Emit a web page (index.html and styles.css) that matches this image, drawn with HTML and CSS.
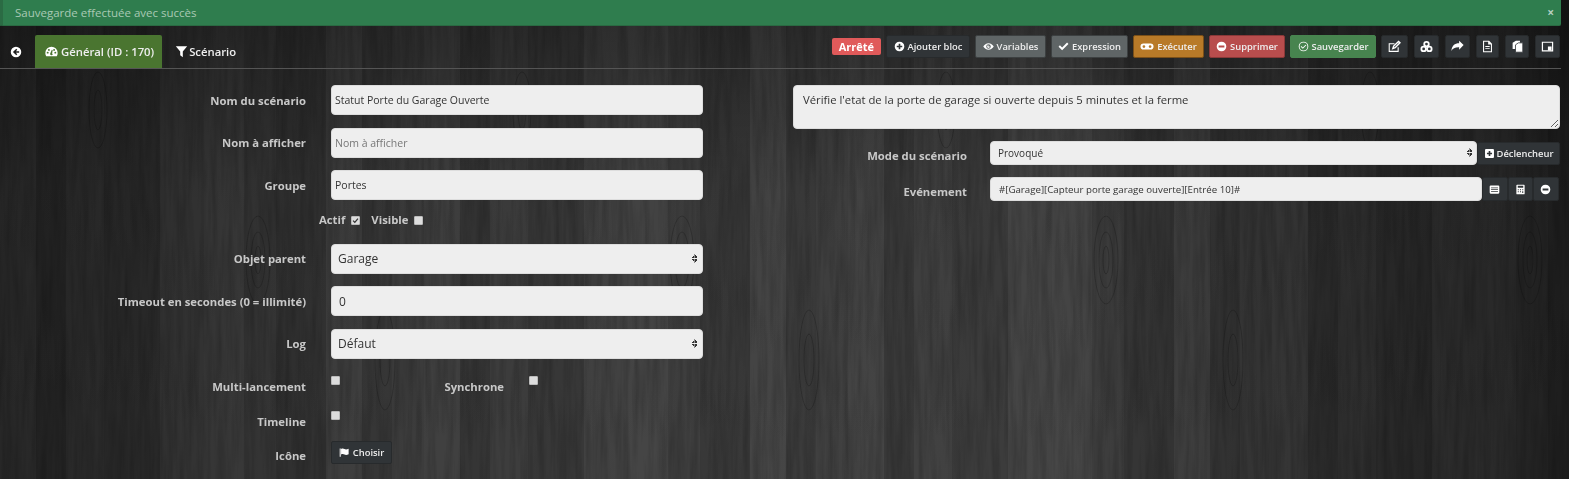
FILE: index.html
```html
<!DOCTYPE html>
<html lang="fr">
<head>
    <meta charset="UTF-8">
    <meta name="viewport" content="width=device-width, initial-scale=1.0">
    <title>Scénario</title>
    <link rel="stylesheet" href="styles.css">
</head>
<body>
    <!-- fond bois -->
    <svg class="wood" width="1569" height="479" aria-hidden="true">
        <defs>
            <filter id="grain" x="0" y="0" width="100%" height="100%">
                <feTurbulence type="fractalNoise" baseFrequency="0.18 0.012" numOctaves="3" seed="11"/>
                <feColorMatrix type="matrix" values="0 0 0 0 0  0 0 0 0 0  0 0 0 0 0  1.400 0 0 0 -0.45"/>
            </filter>
            <pattern id="planks" width="424" height="479" patternUnits="userSpaceOnUse">
                <rect x="0" width="36" height="479" fill="#fff" opacity="0.025"/>
                <rect x="36" width="30" height="479" fill="#000" opacity="0.12"/>
                <rect x="104" width="56" height="479" fill="#000" opacity="0.09"/>
                <rect x="160" width="44" height="479" fill="#fff" opacity="0.02"/>
                <rect x="204" width="40" height="479" fill="#fff" opacity="0.035"/>
                <rect x="276" width="50" height="479" fill="#000" opacity="0.1"/>
                <rect x="326" width="36" height="479" fill="#fff" opacity="0.03"/>
                <rect x="362" width="30" height="479" fill="#000" opacity="0.07"/>
                <g fill="none" stroke="#000" stroke-opacity="0.2">
                    <ellipse cx="258" cy="260" rx="12" ry="44"/>
                    <ellipse cx="258" cy="260" rx="7" ry="28"/>
                    <ellipse cx="258" cy="260" rx="3" ry="14"/>
                    <ellipse cx="98" cy="110" rx="9" ry="38"/>
                    <ellipse cx="98" cy="110" rx="4" ry="20"/>
                    <ellipse cx="385" cy="360" rx="10" ry="50"/>
                    <ellipse cx="385" cy="360" rx="5" ry="26"/>
                </g>
            </pattern>
            <linearGradient id="shade-x">
                <stop offset="0" stop-color="#000" stop-opacity="0.45"/>
                <stop offset="0.25" stop-color="#000" stop-opacity="0.1"/>
                <stop offset="0.65" stop-color="#000" stop-opacity="0"/>
                <stop offset="1" stop-color="#000" stop-opacity="0.5"/>
            </linearGradient>
            <linearGradient id="shade-y" x1="0" y1="0" x2="0" y2="1">
                <stop offset="0" stop-color="#000" stop-opacity="0.35"/>
                <stop offset="0.4" stop-color="#000" stop-opacity="0.05"/>
                <stop offset="1" stop-color="#000" stop-opacity="0"/>
            </linearGradient>
        </defs>
        <rect width="1569" height="479" fill="#424242"/>
        <rect width="1569" height="479" fill="url(#planks)"/>
        <rect width="1569" height="479" filter="url(#grain)" opacity="0.22"/>
        <rect width="1569" height="479" fill="url(#shade-x)"/>
        <rect width="1569" height="479" fill="url(#shade-y)"/>
    </svg>

    <div class="alert">
        <span>Sauvegarde effectuée avec succès</span>
        <span class="alert-close">×</span>
    </div>

    <div class="toolbar">
        <a class="back">
            <svg class="ico back-ico" viewBox="0 0 16 16"><path d="M8 1a7 7 0 1 0 0 14A7 7 0 0 0 8 1zm.4 2.8 1.3 1.3-1.9 1.8h4.4v2.2H7.8l1.900 1.800-1.300 1.300L3.900 8z"/></svg>
        </a>
        <a class="tab tab-active">
            <svg class="ico" viewBox="0 0 16 16"><path d="M8 2.200A7.600 7.600 0 0 0 .4 9.800c0 1.400.4 2.800 1.100 3.900h13c.7-1.100 1.100-2.500 1.100-3.900A7.600 7.600 0 0 0 8 2.200zM3.300 10.600a1.200 1.200 0 1 1 0-2.400 1.200 1.200 0 0 1 0 2.400zm1.500-3.400a1.200 1.200 0 1 1 0-2.400 1.200 1.200 0 0 1 0 2.400zm4.700 4.600a1.700 1.700 0 0 1-3.200-.9l.1-.5 2-4.600 1 .3-.6 4.700c.5.2.8.6.7 1zm1.700-4.600a1.200 1.200 0 1 1 0-2.400 1.200 1.200 0 0 1 0 2.400zm1.500 3.400a1.200 1.200 0 1 1 0-2.400 1.200 1.200 0 0 1 0 2.400z"/></svg>
            Général (ID : 170)
        </a>
        <a class="tab tab-second">
            <svg class="ico" viewBox="0 0 16 16"><path d="M1 1.500h14L9.600 8v7L6.400 12.600V8z"/></svg>
            Scénario
        </a>

        <div class="actions">
            <span class="state">Arrêté</span>
            <a class="btn btn-dark w-bloc"><svg class="ico" viewBox="0 0 16 16"><path d="M8 1a7 7 0 1 0 0 14A7 7 0 0 0 8 1zm4 8.200H9.200V12H6.800V9.200H4V6.800h2.800V4h2.400v2.800H12z"/></svg>Ajouter bloc</a>
            <a class="btn btn-grey w-vars"><svg class="ico" viewBox="0 0 16 16"><path d="M8 3.200C4.800 3.200 2 5.200.4 8c1.600 2.800 4.400 4.800 7.600 4.800s6-2 7.600-4.800C14 5.200 11.200 3.200 8 3.200zm0 8.100A3.300 3.300 0 1 1 8 4.700a3.300 3.300 0 0 1 0 6.600zM8 6a2 2 0 1 0 2 2H8z"/></svg>Variables</a>
            <a class="btn btn-grey w-expr"><svg class="ico" viewBox="0 0 16 16"><path d="M6 13.500.8 8.300l2-2L6 9.500l7.200-7.200 2 2z"/></svg>Expression</a>
            <a class="btn btn-orange w-exec"><svg class="ico ico-wide" viewBox="0 0 20 16"><path fill-rule="evenodd" d="M5 3.500h10a4.500 4.500 0 0 1 0 9H5a4.500 4.500 0 0 1 0-9zM5.500 6a2 2 0 1 0 0 4 2 2 0 0 0 0-4zm9 0a2 2 0 1 0 0 4 2 2 0 0 0 0-4z"/></svg>Exécuter</a>
            <a class="btn btn-red w-supp"><svg class="ico" viewBox="0 0 16 16"><path d="M8 1a7 7 0 1 0 0 14A7 7 0 0 0 8 1zm4.200 8.300H3.800V6.700h8.400z"/></svg>Supprimer</a>
            <a class="btn btn-green w-save"><svg class="ico" viewBox="0 0 16 16"><path fill-rule="evenodd" d="M8 1a7 7 0 1 0 0 14A7 7 0 0 0 8 1zm0 1.300a5.700 5.700 0 1 1 0 11.400A5.700 5.700 0 0 1 8 2.300z"/><path d="M7 11.400 3.900 8.300l1-1L7 9.400l4.100-4.100 1 1z"/></svg>Sauvegarder</a>
            <a class="btn btn-dark btn-ico w-27"><svg class="ico" viewBox="0 0 16 16"><path fill="none" stroke="#fff" stroke-width="1.300" d="M12.500 9v5h-11V4.500H8"/><path fill="none" stroke="#fff" stroke-width="1.800" d="M6 10.500 7 7.500 13 1.800l1.700 1.700L8.800 9.500z"/></svg></a>
            <a class="btn btn-dark btn-ico w-25"><svg class="ico" viewBox="0 0 16 16"><g fill="none" stroke="#fff" stroke-width="2.200"><circle cx="8" cy="5" r="2.800"/><circle cx="4.500" cy="11" r="2.800"/><circle cx="11.500" cy="11" r="2.800"/></g></svg></a>
            <a class="btn btn-dark btn-ico w-25"><svg class="ico" viewBox="0 0 16 16"><path d="M15.500 6.300 10 1v3C4.500 4 1 6.800.5 13.500c1.500-3.200 4.800-4.700 9.500-4.500v3z"/></svg></a>
            <a class="btn btn-dark btn-ico w-23"><svg class="ico" viewBox="0 0 16 16"><path fill-rule="evenodd" d="M2.500 1H10l3.500 3.500V15h-11zm1.300 1.300v11.400h8.400V5.500H8.800V2.300zM5.300 7.500h5.400v1.100H5.300zm0 2.500h5.400v1.100H5.300z"/></svg></a>
            <a class="btn btn-dark btn-ico w-24"><svg class="ico" viewBox="0 0 16 16"><path d="M2 3.500 6 1h5v10H2z"/><path stroke="#303437" d="M5.500 6 9 3.500h5.500V15h-9z"/></svg></a>
            <a class="btn btn-dark btn-ico w-25"><svg class="ico" viewBox="0 0 16 16"><path fill-rule="evenodd" d="M1 2h14v12H1zm1.500 1.500v9h11v-9z"/><path d="M8.500 8H13v5H8.500z"/></svg></a>
        </div>
    </div>

    <div class="content">
        <form class="col-left">
            <div class="row">
                <label>Nom du scénario</label>
                <input class="field small" type="text" value="Statut Porte du Garage Ouverte">
            </div>
            <div class="row">
                <label>Nom à afficher</label>
                <input class="field small" type="text" placeholder="Nom à afficher">
            </div>
            <div class="row">
                <label>Groupe</label>
                <input class="field small" type="text" value="Portes">
            </div>
            <div class="row-checks">
                <label>Actif</label><span class="check"><svg viewBox="0 0 8 8"><path d="M1.200 4.200 3.200 6.200 6.800 1.800" fill="none" stroke="#333" stroke-width="1.400"/></svg></span>
                <label>Visible</label><span class="check"></span>
            </div>
            <div class="row">
                <label>Objet parent</label>
                <div class="select">Garage<span class="arrows"></span></div>
            </div>
            <div class="row">
                <label>Timeout en secondes (0 = illimité)</label>
                <input class="field" type="text" value="0">
            </div>
            <div class="row">
                <label>Log</label>
                <div class="select">Défaut<span class="arrows"></span></div>
            </div>
            <div class="row-opt">
                <label>Multi-lancement</label><span class="check"></span>
                <label class="second">Synchrone</label><span class="check"></span>
            </div>
            <div class="row-opt">
                <label>Timeline</label><span class="check"></span>
            </div>
            <div class="row-opt row-icon">
                <label>Icône</label>
                <a class="btn btn-dark btn-choose"><svg class="ico" viewBox="0 0 16 16"><path d="M1 2h1.500v12H1z"/><path d="M3 3c2-1.200 3.500-.8 5 0s3.500.8 6-.5v8c-2.500 1.300-4.500 1.300-6 .5s-3-1.200-5 0z"/></svg>Choisir</a>
            </div>
        </form>

        <div class="col-right">
            <textarea class="descr">Vérifie l'etat de la porte de garage si ouverte depuis 5 minutes et la ferme</textarea>
            <div class="row-right">
                <label>Mode du scénario</label>
                <div class="select select-small">Provoqué<span class="arrows"></span></div>
                <a class="btn btn-dark btn-trigger"><svg class="ico" viewBox="0 0 16 16"><path d="M3 1.500h10A1.500 1.500 0 0 1 14.500 3v10a1.500 1.500 0 0 1-1.500 1.500H3A1.500 1.500 0 0 1 1.500 13V3A1.500 1.500 0 0 1 3 1.500zm6.200 2.800H6.800v2.500H4.300v2.400h2.500v2.500h2.400V9.200h2.500V6.800H9.200z"/></svg>Déclencheur</a>
            </div>
            <div class="row-right">
                <label>Evénement</label>
                <input class="field field-event" type="text" value="#[Garage][Capteur porte garage ouverte][Entrée 10]#">
                <a class="btn btn-dark btn-addon"><svg class="ico" viewBox="0 0 16 16"><path fill-rule="evenodd" d="M2.500 2h11A1.500 1.500 0 0 1 15 3.500v9a1.500 1.500 0 0 1-1.500 1.500h-11A1.500 1.500 0 0 1 1 12.500v-9A1.500 1.500 0 0 1 2.500 2zM3 5v1.300h10V5zm0 2.500v1.300h10V7.500zm0 2.500v1.300h10V10z"/></svg></a>
                <a class="btn btn-dark btn-addon"><svg class="ico" viewBox="0 0 16 16"><path fill-rule="evenodd" d="M3 1h10a1 1 0 0 1 1 1v12a1 1 0 0 1-1 1H3a1 1 0 0 1-1-1V2a1 1 0 0 1 1-1zm1 1.500v3h8v-3zM4 7.500v1.500h1.500V7.500zm3.200 0v1.500h1.600V7.500zm3.300 0v1.500H12V7.500zM4 10.500V12h1.500v-1.500zm3.200 0V12h1.600v-1.500zm3.300 0V13H12v-2.500z"/></svg></a>
                <a class="btn btn-dark btn-addon"><svg class="ico" viewBox="0 0 16 16"><path d="M8 1a7 7 0 1 0 0 14A7 7 0 0 0 8 1zm4.200 8.300H3.800V6.700h8.400z"/></svg></a>
            </div>
        </div>
    </div>
</body>
</html>
```

FILE: styles.css
```css
html, body {
    margin: 0;
    padding: 0;
    height: 479px;
    overflow: hidden;
}
body {
    font-family: 'Open Sans', 'Noto Sans', sans-serif;
    font-size: 11px;
    color: #eee;
    background: #2c2c2c;
}
.wood {
    position: fixed;
    left: 0;
    top: 0;
    z-index: -1;
}
.ico {
    width: 11px;
    height: 11px;
    fill: #fff;
    flex: none;
    margin-right: 3px;
}
.ico-wide {
    width: 14px;
}

.alert {
    width: 1561px;
    height: 26px;
    box-sizing: border-box;
    padding: 0 7px 1px 12px;
    background: #2f7d4e;
    border-left: 3px solid #2b6b44;
    border-bottom: 1px solid #2a6a42;
    border-radius: 0 0 2px 0;
    color: #a9c9b4;
    font-size: 11.500px;
    display: flex;
    align-items: center;
    justify-content: space-between;
}
.alert-close {
    font-size: 12px;
    font-weight: bold;
    color: #b5cfc0;
}

.toolbar {
    width: 1561px;
    height: 43px;
    box-sizing: border-box;
    padding: 9px 1px 0 0;
    border-bottom: 1px solid #555;
    display: flex;
    align-items: flex-start;
}
.back {
    width: 35px;
    height: 33px;
    display: flex;
    align-items: center;
    padding-left: 10px;
    box-sizing: border-box;
}
.back-ico {
    width: 12px;
    height: 12px;
}
.tab {
    height: 33px;
    box-sizing: border-box;
    padding: 0 10px;
    display: flex;
    align-items: center;
    color: #eee;
    font-size: 11.300px;
    font-weight: 600;
    border-radius: 2px 2px 0 0;
}
.tab .ico {
    width: 13px;
    height: 13px;
    margin-right: 3px;
}
.tab-active {
    background: #4a7530;
    padding-right: 8px;
}
.tab-second {
    margin-left: 3px;
}
.tab-second .ico {
    margin-right: 1px;
}
.actions {
    margin-left: auto;
    display: flex;
    align-items: center;
    gap: 5px;
    height: 23px;
}
.state {
    background: #e05a5a;
    color: #fff;
    font-size: 11px;
    font-weight: 700;
    height: 17px;
    line-height: 17px;
    padding: 0 7px;
    border-radius: 2px;
}
.btn {
    height: 23px;
    box-sizing: border-box;
    display: inline-flex;
    align-items: center;
    justify-content: center;
    color: #eee;
    font-size: 9.400px;
    font-weight: 600;
    border-radius: 2px;
    white-space: nowrap;
}
.btn-dark {
    background: #303437;
    border: 1px solid #272a2c;
}
.btn-grey {
    background: #5f6566;
    border: 1px solid #3c4041;
}
.btn-orange {
    background: #b87a28;
    border: 1px solid #7a4f18;
}
.btn-red {
    background: #b84d4d;
    border: 1px solid #8a3838;
}
.btn-green {
    background: #47844f;
    border: 1px solid #47844f;
}
.btn-ico .ico {
    width: 13px;
    height: 13px;
    margin-right: 0;
}
.btn-ico + .btn-ico {
    margin-left: 1px;
}
.w-bloc { width: 84px; }
.w-vars { width: 71px; }
.w-expr { width: 77px; }
.w-exec { width: 71px; }
.w-supp { width: 76px; }
.w-save { width: 86px; }
.w-27 { width: 27px; }
.w-25 { width: 25px; }
.w-24 { width: 24px; }
.w-23 { width: 23px; }

.content {
    display: flex;
    align-items: flex-start;
    padding-top: 16px;
}
.col-left {
    width: 703px;
    flex: none;
}
.col-right {
    width: 767px;
    margin-left: 90px;
    flex: none;
}
label {
    color: #c8c8c8;
    font-size: 11.300px;
    font-weight: 700;
}
.row {
    display: flex;
    align-items: center;
    height: 30px;
    margin-bottom: 12.500px;
}
.row > label {
    width: 306px;
    text-align: right;
    margin-right: 25px;
    flex: none;
}
.field, .select {
    width: 372px;
    height: 30px;
    box-sizing: border-box;
    background: #eee;
    border: 1px solid #ddd;
    border-radius: 4px;
    font-family: inherit;
    font-size: 12px;
    color: #333;
    outline: none;
    padding: 0 7px;
}
.field.small {
    font-size: 10.500px;
    padding: 0 3px;
}
.field::placeholder {
    color: #777;
    opacity: 1;
}
.select {
    display: flex;
    align-items: center;
    padding: 0 5px 0 6px;
    justify-content: space-between;
}
.arrows {
    width: 5px;
    height: 9px;
    background:
        linear-gradient(to bottom right, transparent 50%, #333 50%) left top / 50% 4px no-repeat,
        linear-gradient(to bottom left, transparent 50%, #333 50%) right top / 50% 4px no-repeat,
        linear-gradient(to top right, transparent 50%, #333 50%) left bottom / 50% 4px no-repeat,
        linear-gradient(to top left, transparent 50%, #333 50%) right bottom / 50% 4px no-repeat;
}
.check {
    width: 7px;
    height: 7px;
    background: #ddd;
    border: 1px solid #bbb;
    border-radius: 1px;
    display: inline-block;
    flex: none;
}
.check svg {
    display: block;
}
.row-checks {
    display: flex;
    align-items: center;
    height: 14px;
    margin: 1px 0 17px 319px;
    gap: 6px;
}
.row-checks label:nth-of-type(2) {
    margin-left: 5px;
}
.row-checks .check {
    margin-top: 2px;
}
.row-opt {
    display: flex;
    align-items: flex-start;
    height: 35px;
}
.row-opt label {
    width: 306px;
    text-align: right;
    margin-right: 25px;
    margin-top: 8px;
    flex: none;
}
.row-opt .check {
    margin-top: 5px;
}
.row-opt .second {
    width: 95px;
    margin-left: 69px;
    margin-right: 25px;
}
.btn-choose {
    width: 61px;
}
.row-icon label {
    margin-top: 7px;
}

.descr {
    display: block;
    width: 767px;
    height: 44px;
    box-sizing: border-box;
    background: #eee;
    border: 1px solid #ddd;
    border-radius: 4px;
    padding: 6px 9px;
    font-family: inherit;
    font-size: 11.300px;
    color: #333;
    outline: none;
}
.row-right {
    display: flex;
    align-items: center;
    margin-top: 12px;
    height: 24px;
}
.row-right label {
    width: 174px;
    text-align: right;
    margin-right: 23px;
    padding-top: 4px;
    flex: none;
}
.select-small {
    width: 487px;
    height: 24px;
    font-size: 10px;
    padding: 0 4px 1px 7px;
}
.btn-trigger {
    width: 83px;
    height: 23px;
}
.btn-trigger .ico {
    margin-right: 2px;
}
.field-event {
    width: 492px;
    height: 24px;
    font-size: 9.700px;
    padding: 0 8px;
}
.btn-addon {
    width: 25.600px;
    height: 24px;
}
.btn-addon .ico {
    margin-right: 0;
}
```
